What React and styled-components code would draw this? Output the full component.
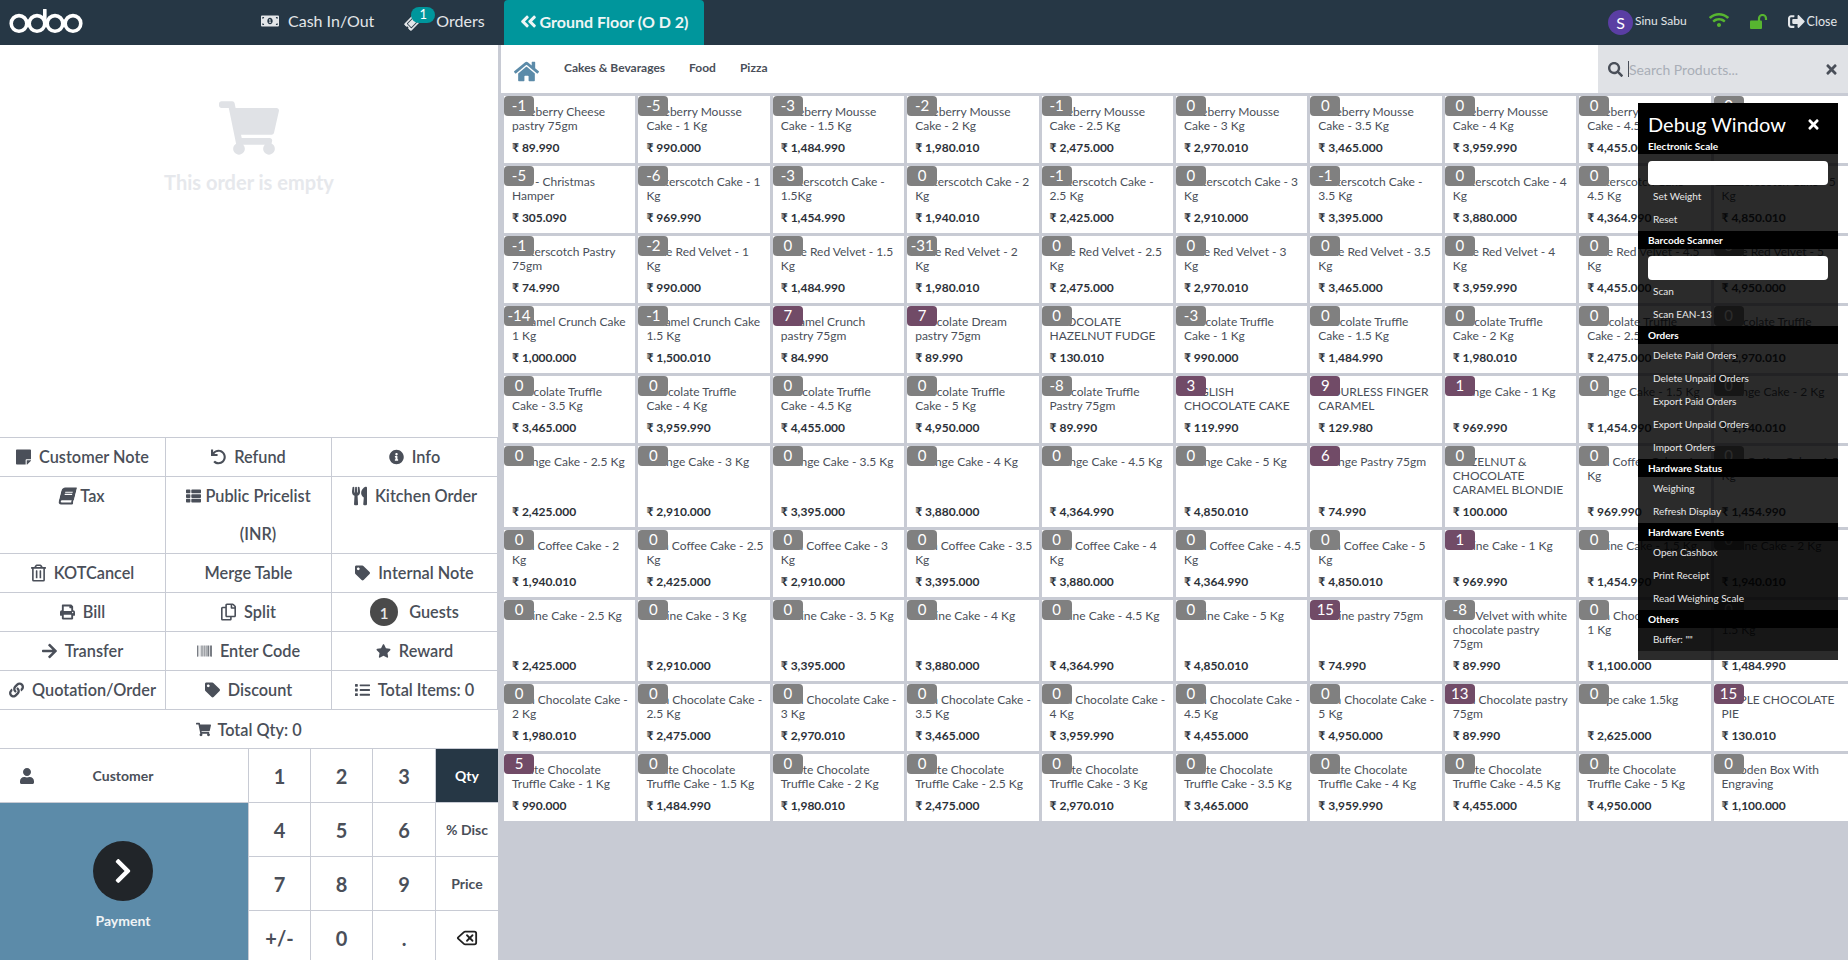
import React from "react";
import styled, { createGlobalStyle } from "styled-components";
import {
  FaMoneyBillAlt,
  FaTicketAlt,
  FaAngleDoubleLeft,
  FaHome,
  FaSearch,
  FaTimes,
  FaStickyNote,
  FaUndo,
  FaInfoCircle,
  FaBook,
  FaThList,
  FaUtensils,
  FaRegTrashAlt,
  FaTag,
  FaPrint,
  FaRegCopy,
  FaArrowRight,
  FaBarcode,
  FaStar,
  FaLink,
  FaList,
  FaShoppingCart,
  FaUser,
  FaChevronRight,
  FaWifi,
  FaSignOutAlt,
} from "react-icons/fa";
import { Delete } from "lucide-react";

const navy = "#263745";
const teal = "#00969c";
const line = "#c8cbd4";
const ink = "#4a4f59";

const GlobalStyle = createGlobalStyle`
  html, body {
    margin: 0;
    padding: 0;
    height: 100%;
    overflow: hidden;
    background: ${line};
    font-family: Lato, "Open Sans", sans-serif;
  }
  * { box-sizing: border-box; }
`;

const cake = (prefix, sizes) => sizes.map(([q, s, p]) => [q, `${prefix} - ${s}`, p]);

const products = [
  [-1, "Blueberry Cheese pastry 75gm", "89.990"],
  ...cake("Blueberry Mousse Cake", [
    [-5, "1 Kg", "990.000"],
    [-3, "1.5 Kg", "1,484.990"],
    [-2, "2 Kg", "1,980.010"],
    [-1, "2.5 Kg", "2,475.000"],
    [0, "3 Kg", "2,970.010"],
    [0, "3.5 Kg", "3,465.000"],
    [0, "4 Kg", "3,959.990"],
    [0, "4.5 Kg", "4,455.000"],
    [0, "5 Kg", "4,950.000"],
  ]),
  [-5, "Gift - Christmas Hamper", "305.090"],
  ...cake("Butterscotch Cake", [
    [-6, "1 Kg", "969.990"],
    [-3, "1.5Kg", "1,454.990"],
    [0, "2 Kg", "1,940.010"],
    [-1, "2.5 Kg", "2,425.000"],
    [0, "3 Kg", "2,910.000"],
    [-1, "3.5 Kg", "3,395.000"],
    [0, "4 Kg", "3,880.000"],
    [0, "4.5 Kg", "4,364.990"],
    [0, "5 Kg", "4,850.010"],
  ]),
  [-1, "Butterscotch Pastry 75gm", "74.990"],
  ...cake("Cake Red Velvet", [
    [-2, "1 Kg", "990.000"],
    [0, "1.5 Kg", "1,484.990"],
    [-31, "2 Kg", "1,980.010"],
    [0, "2.5 Kg", "2,475.000"],
    [0, "3 Kg", "2,970.010"],
    [0, "3.5 Kg", "3,465.000"],
    [0, "4 Kg", "3,959.990"],
    [0, "4.5 Kg", "4,455.000"],
    [0, "5 Kg", "4,950.000"],
  ]),
  [-14, "Caramel Crunch Cake 1 Kg", "1,000.000"],
  [-1, "Caramel Crunch Cake 1.5 Kg", "1,500.010"],
  [7, "Caramel Crunch pastry 75gm", "84.990"],
  [7, "Chocolate Dream pastry 75gm", "89.990"],
  [0, "CHOCOLATE HAZELNUT FUDGE", "130.010"],
  ...cake("Chocolate Truffle Cake", [
    [-3, "1 Kg", "990.000"],
    [0, "1.5 Kg", "1,484.990"],
    [0, "2 Kg", "1,980.010"],
    [0, "2.5 Kg", "2,475.000"],
    [0, "3 Kg", "2,970.010"],
    [0, "3.5 Kg", "3,465.000"],
    [0, "4 Kg", "3,959.990"],
    [0, "4.5 Kg", "4,455.000"],
    [0, "5 Kg", "4,950.000"],
  ]),
  [-8, "Chocolate Truffle Pastry 75gm", "89.990"],
  [3, "ENGLISH CHOCOLATE CAKE", "119.990"],
  [9, "FLOURLESS FINGER CARAMEL", "129.980"],
  ...cake("Orange Cake", [
    [1, "1 Kg", "969.990"],
    [0, "1.5 Kg", "1,454.990"],
    [0, "2 Kg", "1,940.010"],
    [0, "2.5 Kg", "2,425.000"],
    [0, "3 Kg", "2,910.000"],
    [0, "3.5 Kg", "3,395.000"],
    [0, "4 Kg", "3,880.000"],
    [0, "4.5 Kg", "4,364.990"],
    [0, "5 Kg", "4,850.010"],
  ]),
  [6, "Orange Pastry 75gm", "74.990"],
  [0, "HAZELNUT & CHOCOLATE CARAMEL BLONDIE", "100.000"],
  ...cake("Irish Coffee Cake", [
    [0, "1 Kg", "969.990"],
    [0, "1.5 Kg", "1,454.990"],
    [0, "2 Kg", "1,940.010"],
    [0, "2.5 Kg", "2,425.000"],
    [0, "3 Kg", "2,910.000"],
    [0, "3.5 Kg", "3,395.000"],
    [0, "4 Kg", "3,880.000"],
    [0, "4.5 Kg", "4,364.990"],
    [0, "5 Kg", "4,850.010"],
  ]),
  ...cake("Praline Cake", [
    [1, "1 Kg", "969.990"],
    [0, "1.5 Kg", "1,454.990"],
    [0, "2 Kg", "1,940.010"],
    [0, "2.5 Kg", "2,425.000"],
    [0, "3 Kg", "2,910.000"],
    [0, "3. 5 Kg", "3,395.000"],
    [0, "4 Kg", "3,880.000"],
    [0, "4.5 Kg", "4,364.990"],
    [0, "5 Kg", "4,850.010"],
  ]),
  [15, "Praline pastry 75gm", "74.990"],
  [-8, "Red Velvet with white chocolate pastry 75gm", "89.990"],
  ...cake("Rich Chocolate Cake", [
    [0, "1 Kg", "1,100.000"],
    [0, "1.5 Kg", "1,484.990"],
    [0, "2 Kg", "1,980.010"],
    [0, "2.5 Kg", "2,475.000"],
    [0, "3 Kg", "2,970.010"],
    [0, "3.5 Kg", "3,465.000"],
    [0, "4 Kg", "3,959.990"],
    [0, "4.5 Kg", "4,455.000"],
    [0, "5 Kg", "4,950.000"],
  ]),
  [13, "Rich Chocolate pastry 75gm", "89.990"],
  [0, "Shape cake 1.5kg", "2,625.000"],
  [15, "TRIPLE CHOCOLATE PIE", "130.010"],
  ...cake("White Chocolate Truffle Cake", [
    [5, "1 Kg", "990.000"],
    [0, "1.5 Kg", "1,484.990"],
    [0, "2 Kg", "1,980.010"],
    [0, "2.5 Kg", "2,475.000"],
    [0, "3 Kg", "2,970.010"],
    [0, "3.5 Kg", "3,465.000"],
    [0, "4 Kg", "3,959.990"],
    [0, "4.5 Kg", "4,455.000"],
    [0, "5 Kg", "4,950.000"],
  ]),
  [0, "Wooden Box With Engraving", "1,100.000"],
];

const controls = [
  [<FaStickyNote />, "Customer Note"],
  [<FaUndo />, "Refund"],
  [<FaInfoCircle />, "Info"],
  [<BookIcon />, "Tax", 5],
  [<FaThList />, "Public Pricelist (INR)", 4],
  [<FaUtensils />, "Kitchen Order"],
  [<FaRegTrashAlt />, "KOTCancel"],
  [null, "Merge Table"],
  [<FaTag />, "Internal Note"],
  [<FaPrint />, "Bill"],
  [<FaRegCopy />, "Split"],
  ["guests", "Guests"],
  [<FaArrowRight />, "Transfer"],
  [<FaBarcode />, "Enter Code"],
  [<FaStar />, "Reward"],
  [<FaLink />, "Quotation/Order"],
  [<FaTag />, "Discount"],
  [<FaList />, "Total Items: 0"],
];

const debugSections = [
  { title: "Barcode Scanner", input: true, items: ["Scan", "Scan EAN-13"] },
  {
    title: "Orders",
    items: [
      "Delete Paid Orders",
      "Delete Unpaid Orders",
      "Export Paid Orders",
      "Export Unpaid Orders",
      "Import Orders",
    ],
  },
  { title: "Hardware Status", items: ["Weighing", "Refresh Display"] },
  {
    title: "Hardware Events",
    dark: true,
    items: ["Open Cashbox", "Print Receipt", "Read Weighing Scale"],
  },
  { title: "Others", dark: true, items: ['Buffer: ""'] },
];

function BookIcon() {
  return <FaBook style={{ transform: "skewX(-14deg)" }} />;
}

function OdooLogo() {
  return (
    <svg width="76" height="24" viewBox="0 0 76 24" fill="none" stroke="#fff" strokeWidth="3.6">
      <circle cx="11" cy="14.4" r="7.8" />
      <circle cx="29" cy="14.4" r="7.8" />
      <path d="M36.8 14V1" strokeLinecap="round" />
      <circle cx="47" cy="14.4" r="7.8" />
      <circle cx="65" cy="14.4" r="7.8" />
    </svg>
  );
}

function OpenLock() {
  return (
    <svg width="18" height="15" viewBox="0 0 18 15">
      <rect x="0" y="6.5" width="12" height="8.5" rx="1" fill="currentColor" />
      <path d="M9 7V4.5a3.5 3.5 0 0 1 7 0V6" fill="none" stroke="currentColor" strokeWidth="2.2" />
    </svg>
  );
}

export default function App() {
  return (
    <Screen>
      <GlobalStyle />
      <Header>
        <LogoSlot>
          <OdooLogo />
        </LogoSlot>
        <HeaderLink $left={177}>
          <FaMoneyBillAlt size={18} />
          <span>Cash In/Out</span>
        </HeaderLink>
        <HeaderLink $left={31}>
          <TicketIcon>
            <FaTicketAlt size={15} />
          </TicketIcon>
          <OrderCount>1</OrderCount>
          <span>Orders</span>
        </HeaderLink>
        <FloorTab>
          <FaAngleDoubleLeft size={19} />
          <span>Ground Floor (O D 2)</span>
        </FloorTab>
        <StatusGroup>
          <Avatar>S</Avatar>
          <UserName>Sinu Sabu</UserName>
          <WifiIcon>
            <FaWifi size={20} />
          </WifiIcon>
          <LockIcon>
            <OpenLock />
          </LockIcon>
          <CloseLink>
            <FaSignOutAlt size={17} />
            <span>Close</span>
          </CloseLink>
        </StatusGroup>
      </Header>

      <Body>
        <LeftPane>
          <OrderArea>
            <FaShoppingCart size={60} />
            <EmptyText>This order is empty</EmptyText>
          </OrderArea>
          <ControlGrid>
            {controls.map(([icon, label, gap]) => (
              <ControlButton key={label} $gap={gap}>
                {icon === "guests" ? <GuestCount>1</GuestCount> : icon}
                {label === "Public Pricelist (INR)" ? (
                  <span>Public Pricelist<br />(INR)</span>
                ) : (
                  <span>{label}</span>
                )}
              </ControlButton>
            ))}
            <TotalQty>
              <FaShoppingCart size={15} />
              <span>Total Qty: 0</span>
            </TotalQty>
          </ControlGrid>
          <PadRow>
            <ActionColumn>
              <CustomerButton>
                <FaUser size={14} />
                <span>Customer</span>
              </CustomerButton>
              <PaymentButton>
                <PayCircle>
                  <FaChevronRight size={28} />
                </PayCircle>
                <span>Payment</span>
              </PaymentButton>
            </ActionColumn>
            <Numpad>
              {["1", "2", "3"].map((k) => <NumKey key={k}>{k}</NumKey>)}
              <ModeKey $active>Qty</ModeKey>
              {["4", "5", "6"].map((k) => <NumKey key={k}>{k}</NumKey>)}
              <ModeKey>% Disc</ModeKey>
              {["7", "8", "9"].map((k) => <NumKey key={k}>{k}</NumKey>)}
              <ModeKey>Price</ModeKey>
              {["+/-", "0", "."].map((k) => <NumKey key={k}>{k}</NumKey>)}
              <ModeKey>
                <Delete size={22} color="#222" />
              </ModeKey>
            </Numpad>
          </PadRow>
        </LeftPane>

        <RightPane>
          <CategoryBar>
            <HomeLink>
              <FaHome size={25} />
            </HomeLink>
            <CategoryLink>Cakes &amp; Bevarages</CategoryLink>
            <CategoryLink>Food</CategoryLink>
            <CategoryLink>Pizza</CategoryLink>
            <SearchBox>
              <FaSearch size={15} />
              <Caret />
              <SearchInput placeholder="Search Products..." />
              <ClearIcon>
                <FaTimes size={15} />
              </ClearIcon>
            </SearchBox>
          </CategoryBar>
          <ProductGrid>
            {products.map(([qty, name, price], i) => (
              <ProductCard key={i}>
                <QtyBadge $positive={qty > 0}>{qty}</QtyBadge>
                <ProductName>{name}</ProductName>
                <ProductPrice>₹ {price}</ProductPrice>
              </ProductCard>
            ))}
          </ProductGrid>
        </RightPane>
      </Body>

      <DebugWindow>
        <DebugHead>
          <DebugTitle>
            <span>Debug Window</span>
            <FaTimes size={15} />
          </DebugTitle>
          <DebugSubtitle>Electronic Scale</DebugSubtitle>
        </DebugHead>
        <DebugInput />
        <DebugItems>
          <DebugItem>Set Weight</DebugItem>
          <DebugItem>Reset</DebugItem>
        </DebugItems>
        {debugSections.map((s) => (
          <React.Fragment key={s.title}>
            <DebugBand>{s.title}</DebugBand>
            {s.input && <DebugInput />}
            <DebugItems $dark={s.dark}>
              {s.items.map((it) => <DebugItem key={it}>{it}</DebugItem>)}
            </DebugItems>
          </React.Fragment>
        ))}
      </DebugWindow>
    </Screen>
  );
}

const Screen = styled.div`
  position: relative;
  width: 100vw;
  height: 100vh;
  display: flex;
  flex-direction: column;
  overflow: hidden;
  color: ${ink};
`;

const Header = styled.header`
  height: 45px;
  flex: none;
  display: flex;
  align-items: center;
  background: ${navy};
  color: #e3e6e9;
  font-size: 16px;
`;

const LogoSlot = styled.div`
  width: 76px;
  height: 24px;
  margin: 0 0 3px 8px;
  display: flex;
`;

const HeaderLink = styled.div`
  position: relative;
  display: flex;
  align-items: center;
  gap: 9px;
  margin-left: ${(p) => p.$left}px;
  height: 45px;
  padding-bottom: 4px;
`;

const TicketIcon = styled.span`
  display: flex;
  transform: rotate(-45deg);
  margin-top: 3px;
  margin-right: 7px;
`;

const OrderCount = styled.span`
  position: absolute;
  left: 6px;
  top: 7px;
  width: 24px;
  height: 16px;
  border-radius: 8px;
  background: ${teal};
  color: #fff;
  font-size: 13px;
  line-height: 15px;
  text-align: center;
`;

const FloorTab = styled.div`
  width: 200px;
  height: 45px;
  margin-left: 19px;
  padding: 0 0 3px 15px;
  display: flex;
  align-items: center;
  gap: 2px;
  background: ${teal};
  border-radius: 4px 4px 0 0;
  color: #eef5f5;
  font-weight: 700;
`;

const StatusGroup = styled.div`
  margin-left: auto;
  display: flex;
  align-items: center;
  padding-right: 11px;
  font-size: 12px;
`;

const Avatar = styled.span`
  width: 25px;
  height: 25px;
  border-radius: 50%;
  background: #5a3ea3;
  color: #fff;
  font-size: 16px;
  line-height: 25px;
  text-align: center;
`;

const UserName = styled.span`
  margin-left: 2px;
  margin-bottom: 4px;
`;

const WifiIcon = styled.span`
  display: flex;
  color: #57b530;
  margin-left: 22px;
  margin-bottom: 6px;
`;

const LockIcon = styled.span`
  display: flex;
  color: #57b530;
  margin-left: 21px;
  margin-bottom: 3px;
`;

const CloseLink = styled.span`
  display: flex;
  align-items: center;
  gap: 2px;
  margin-left: 20px;
  margin-bottom: 3px;
  font-size: 12.5px;
`;

const Body = styled.div`
  flex: 1;
  min-height: 0;
  display: flex;
`;

const LeftPane = styled.aside`
  width: 498px;
  flex: none;
  display: flex;
  flex-direction: column;
  background: #fff;
`;

const OrderArea = styled.div`
  height: 393px;
  padding-top: 53px;
  display: flex;
  flex-direction: column;
  align-items: center;
  color: #e0e2e6;
  border-bottom: 1px solid ${line};
`;

const EmptyText = styled.div`
  margin-top: 12px;
  font-size: 20px;
  font-weight: 700;
  color: #e6e8ec;
`;

const ControlGrid = styled.div`
  display: grid;
  grid-template-columns: repeat(3, 1fr);
`;

const ControlButton = styled.div`
  display: flex;
  justify-content: center;
  align-items: flex-start;
  gap: ${(p) => p.$gap ?? 8}px;
  line-height: 38px;
  font-size: 16.3px;
  font-weight: 600;
  text-align: center;
  border-right: 1px solid ${line};
  border-bottom: 1px solid ${line};

  & > svg {
    flex: none;
    width: 15px;
    height: 38px;
  }
`;

const GuestCount = styled.span`
  width: 28px;
  height: 28px;
  margin: 5px 3px 0 0;
  border-radius: 50%;
  background: #4a4a4a;
  color: #e8e8e8;
  font-size: 15px;
  line-height: 30px;
`;

const TotalQty = styled.div`
  grid-column: 1 / -1;
  height: 39px;
  display: flex;
  align-items: center;
  justify-content: center;
  gap: 6px;
  font-size: 16.3px;
  font-weight: 600;
  border-bottom: 1px solid ${line};
`;

const PadRow = styled.div`
  flex: 1;
  min-height: 0;
  display: flex;
`;

const ActionColumn = styled.div`
  width: 248px;
  display: flex;
  flex-direction: column;
`;

const CustomerButton = styled.div`
  height: 54px;
  flex: none;
  display: flex;
  align-items: center;
  padding-left: 20px;
  font-size: 14px;
  font-weight: 700;
  border-bottom: 1px solid ${line};

  & > svg {
    width: 14px;
    height: 16px;
  }

  & > span {
    flex: 1;
    text-align: center;
    padding-right: 36px;
  }
`;

const PaymentButton = styled.div`
  flex: 1;
  display: flex;
  flex-direction: column;
  align-items: center;
  padding: 38px 2px 0 0;
  background: #5c8ba9;
  color: #f0f3f5;
  font-size: 14px;
  font-weight: 700;
`;

const PayCircle = styled.div`
  width: 60px;
  height: 60px;
  margin-bottom: 11px;
  display: flex;
  align-items: center;
  justify-content: center;
  border-radius: 50%;
  background: #212529;
  color: #fff;
`;

const Numpad = styled.div`
  flex: 1;
  display: grid;
  grid-template-columns: 62px 62px 63px 1fr;
  grid-auto-rows: 54px;
  background: #fff;
`;

const NumKey = styled.div`
  display: flex;
  align-items: center;
  justify-content: center;
  font-size: 20px;
  font-weight: 700;
  border-left: 1px solid ${line};
  border-bottom: 1px solid ${line};
`;

const ModeKey = styled(NumKey)`
  font-size: 14px;
  background: ${(p) => (p.$active ? navy : "#fff")};
  color: ${(p) => (p.$active ? "#fff" : ink)};
`;

const RightPane = styled.main`
  flex: 1;
  min-width: 0;
  display: flex;
  flex-direction: column;
  padding-left: 3px;
`;

const CategoryBar = styled.div`
  height: 48px;
  flex: none;
  display: flex;
  align-items: center;
  background: #fff;
`;

const HomeLink = styled.span`
  display: flex;
  margin: 4px 13px 0 13px;
  color: #5c8ba9;
`;

const CategoryLink = styled.span`
  margin: 0 12px 4px;
  font-size: 12px;
  font-weight: 700;
`;

const SearchBox = styled.div`
  margin-left: auto;
  width: 250px;
  height: 48px;
  display: flex;
  align-items: center;
  padding: 0 9px 0 10px;
  background: #e0e2e6;
`;

const Caret = styled.span`
  width: 1px;
  height: 16px;
  margin-left: 5px;
  background: #4a4f59;
`;

const SearchInput = styled.input`
  flex: 1;
  min-width: 0;
  border: none;
  outline: none;
  padding: 0;
  background: transparent;
  font: 14px Lato, sans-serif;

  &::placeholder {
    color: #a9aeb7;
    opacity: 1;
  }
`;

const ClearIcon = styled.span`
  display: flex;
`;

const ProductGrid = styled.div`
  display: grid;
  grid-template-columns: repeat(9, 131.4px) 1fr;
  gap: 3px;
  padding: 3px 0 0 3px;
`;

const ProductCard = styled.article`
  position: relative;
  display: flex;
  flex-direction: column;
  padding: 9px 5.5px 8px 8px;
  background: #fff;
`;

const QtyBadge = styled.span`
  position: absolute;
  left: 0;
  top: 0;
  width: 30px;
  height: 20px;
  border-radius: 4px;
  background: ${(p) => (p.$positive ? "#714b67" : "#808080")};
  color: #fff;
  font-size: 15px;
  line-height: 18px;
  text-align: center;
`;

const ProductName = styled.div`
  max-width: 118px;
  font-size: 12px;
  line-height: 14px;
  margin-bottom: 7px;
`;

const ProductPrice = styled.div`
  margin-top: auto;
  color: #2c3138;
  font-size: 12px;
  font-weight: 700;
  line-height: 15px;
`;

const DebugWindow = styled.section`
  position: absolute;
  left: 1638px;
  top: 103px;
  width: 200px;
  padding-bottom: 9px;
  background: rgba(0, 0, 0, 0.83);
  color: #e8e8e8;
  font-size: 10px;
`;

const DebugHead = styled.div`
  height: 51px;
  padding: 8px 10px 0;
  background: #000;
  color: #fff;
`;

const DebugTitle = styled.div`
  display: flex;
  justify-content: space-between;
  align-items: center;
  padding-right: 7px;
  font-size: 20px;
  line-height: 26px;
`;

const DebugSubtitle = styled.div`
  margin-top: 3px;
  font-size: 10px;
  font-weight: 700;
`;

const DebugInput = styled.div`
  width: 180px;
  height: 24px;
  margin: 7px 10px 0;
  border-radius: 4px;
  background: #fff;
`;

const DebugBand = styled.div`
  height: 18px;
  padding-left: 10px;
  background: #000;
  color: #fff;
  font-weight: 700;
  line-height: 18px;
`;

const DebugItems = styled.div`
  background: ${(p) => (p.$dark ? "rgba(0, 0, 0, 0.45)" : "transparent")};
`;

const DebugItem = styled.div`
  height: 23px;
  padding-left: 15px;
  line-height: 23px;
`;
